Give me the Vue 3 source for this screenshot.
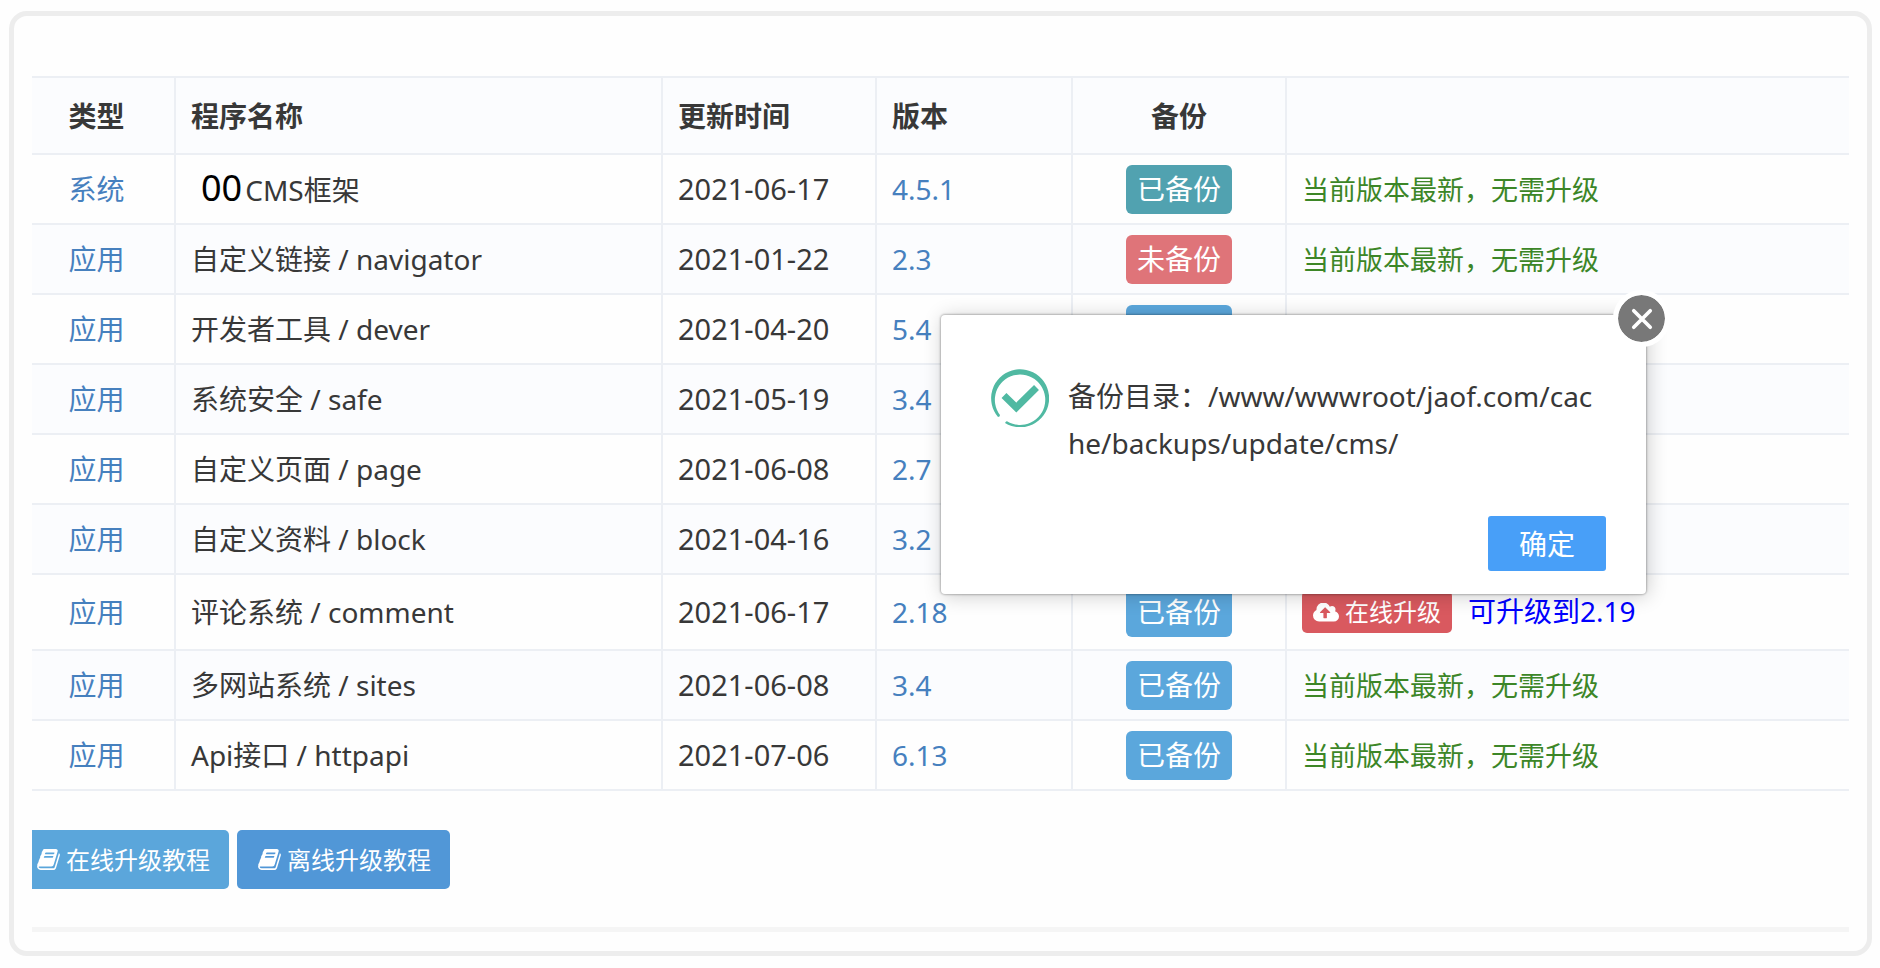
<script setup>
import { ref } from 'vue'

const latest = '当前版本最新，无需升级'

const rows = [
  { type: '系统', mark: '00', name: 'CMS框架', date: '2021-06-17', version: '4.5.1', backup: '已备份', tone: 'teal', status: latest },
  { type: '应用', name: '自定义链接 / navigator', date: '2021-01-22', version: '2.3', backup: '未备份', tone: 'red', status: latest },
  { type: '应用', name: '开发者工具 / dever', date: '2021-04-20', version: '5.4', tone: 'blue' },
  { type: '应用', name: '系统安全 / safe', date: '2021-05-19', version: '3.4' },
  { type: '应用', name: '自定义页面 / page', date: '2021-06-08', version: '2.7' },
  { type: '应用', name: '自定义资料 / block', date: '2021-04-16', version: '3.2' },
  { type: '应用', name: '评论系统 / comment', date: '2021-06-17', version: '2.18', backup: '已备份', tone: 'blue', upgrade: '可升级到2.19' },
  { type: '应用', name: '多网站系统 / sites', date: '2021-06-08', version: '3.4', backup: '已备份', tone: 'blue', status: latest },
  { type: '应用', name: 'Api接口 / httpapi', date: '2021-07-06', version: '6.13', backup: '已备份', tone: 'blue', status: latest },
]

const guides = [
  { label: '在线升级教程', kind: 'online' },
  { label: '离线升级教程', kind: 'offline' },
]

const open = ref(true)
</script>

<template>
  <div class="page">
    <main class="frame">
      <table class="apps">
        <colgroup>
          <col class="c-type" />
          <col class="c-name" />
          <col class="c-date" />
          <col class="c-version" />
          <col class="c-backup" />
          <col />
        </colgroup>
        <thead>
          <tr>
            <th class="type">类型</th>
            <th>程序名称</th>
            <th>更新时间</th>
            <th>版本</th>
            <th class="backup">备份</th>
            <th></th>
          </tr>
        </thead>
        <tbody>
          <tr v-for="row in rows" :key="row.name" :class="{ tall: row.upgrade }">
            <td class="type"><a href="#">{{ row.type }}</a></td>
            <td><span v-if="row.mark" class="mark">{{ row.mark }}</span>{{ row.name }}</td>
            <td class="date">{{ row.date }}</td>
            <td><a href="#">{{ row.version }}</a></td>
            <td class="backup"><button v-if="row.tone" type="button" class="badge" :class="row.tone">{{ row.backup }}</button></td>
            <td>
              <div v-if="row.upgrade" class="upgrade">
                <button type="button" class="upgrade-btn">
                  <svg class="cloud" viewBox="0 256 1920 1344" aria-hidden="true">
                    <path fill="currentColor" d="M1280 928q0-14-9-23l-352-352q-9-9-23-9t-23 9l-351 351q-10 12-10 24 0 14 9 23t23 9h224v352q0 13 9.5 22.5t22.5 9.5h192q13 0 22.5-9.5t9.5-22.5v-352h224q13 0 22.5-9.5t9.5-22.5zm640 288q0 159-112.5 271.5t-271.5 112.5h-1088q-185 0-316.5-131.5t-131.5-316.5q0-130 70-240t188-165q-2-30-2-43 0-212 150-362t362-150q156 0 285.5 87t188.5 231q71-62 166-62 106 0 181 75t75 181q0 76-41 138 130 31 213.5 135.5t83.5 238.5z" />
                  </svg>
                  <span>在线升级</span>
                </button>
                <span class="target">{{ row.upgrade }}</span>
              </div>
              <span v-else-if="row.status" class="latest">{{ row.status }}</span>
            </td>
          </tr>
        </tbody>
      </table>

      <div class="guides">
        <a v-for="guide in guides" :key="guide.kind" href="#" class="guide" :class="guide.kind">
          <svg class="book" viewBox="0 128 1664 1536" aria-hidden="true">
            <path fill="currentColor" d="M1639 478q40 57 18 129l-275 906q-19 64-76.5 107.5t-122.5 43.5h-923q-77 0-148.5-53.5t-99.5-131.5q-24-67-2-127 0-4 3-27t4-37q1-8-3-21.5t-3-19.5q2-11 8-21t16.5-23.5 16.5-23.5q23-38 45-91.5t30-91.5q3-10 .5-30t-.5-28q3-11 17-28t17-23q21-36 42-92t25-90q1-9-2.5-32t.5-28q4-13 22-30.5t22-22.5q19-26 42.5-84.5t27.5-96.5q1-8-3-25.5t-2-26.5q2-8 9-18t18-23 17-21q8-12 16.5-30.5t15-35 16-36 19.5-32 26.5-23.5 36-11.5 47.5 5.5l-1 3q38-9 51-9h761q74 0 114 56t18 130l-274 906q-36 119-71.5 153.5t-128.5 34.5h-869q-27 0-38 15-11 16-1 43 24 70 144 70h923q29 0 56-15.5t35-41.5l300-987q7-22 5-57 38 15 59 43zm-1064 2q-4 13 2 22.5t20 9.5h608q13 0 25.5-9.5t16.5-22.5l21-64q4-13-2-22.5t-20-9.5h-608q-13 0-25.5 9.5t-16.5 22.5zm-83 256q-4 13 2 22.5t20 9.5h608q13 0 25.5-9.5t16.5-22.5l21-64q4-13-2-22.5t-20-9.5h-608q-13 0-25.5 9.5t-16.5 22.5z" />
          </svg>
          <span>{{ guide.label }}</span>
        </a>
      </div>

      <hr class="rule" />
    </main>

    <section v-if="open" class="dialog" role="dialog" aria-label="备份目录">
      <div class="message">
        <svg class="done" viewBox="0 0 58 58" aria-hidden="true">
          <path fill="#50b9a2" d="M7 48A29 29 0 1 1 14 54Q15 52 16 52.300A25.200 25.200 0 1 0 9 46Q9 48 7 48Z" />
          <path fill="none" stroke="#50b9a2" stroke-width="7" d="M13 26.500L25.300 38.500L45.500 18.500" />
        </svg>
        <p class="text">备份目录：/www/wwwroot/jaof.com/cache/backups/update/cms/</p>
      </div>
      <div class="actions">
        <button type="button" class="confirm" @click="open = false">确定</button>
      </div>
      <button type="button" class="close" aria-label="关闭" @click="open = false">
        <svg viewBox="0 0 24 24" aria-hidden="true">
          <path d="M3 3L21 21M21 3L3 21" fill="none" stroke="#fff" stroke-width="4" stroke-linecap="round" />
        </svg>
      </button>
    </section>
  </div>
</template>

<style>
body {
  background: #fefefe;
}
</style>

<style scoped>
.page {
  position: relative;
  box-sizing: border-box;
  padding: 11px 8px 12px 9px;
  color: #383838;
  font-family: "Noto Sans", "Noto Sans CJK SC", sans-serif;
  font-size: 28px;
  line-height: 40px;
}

button {
  border: 0;
  font: inherit;
  cursor: pointer;
}

a {
  color: #4680be;
  text-decoration: none;
}

.frame {
  border: 5px solid #ededed;
  border-radius: 18px;
  padding: 60px 18px 19px;
}

.apps {
  width: 100%;
  table-layout: fixed;
  border-collapse: separate;
  border-spacing: 0;
}

.c-type { width: 144px; }
.c-name { width: 487px; }
.c-date { width: 214px; }
.c-version { width: 196px; }
.c-backup { width: 214px; }

th,
td {
  box-sizing: border-box;
  height: 70px;
  padding: 0 15px;
  border-right: 2px solid #eceff4;
  border-bottom: 2px solid #eceff4;
  text-align: left;
  vertical-align: middle;
  white-space: nowrap;
}

th {
  height: 79px;
  border-top: 2px solid #eceff4;
  font-weight: 700;
}

th:last-child,
td:last-child {
  border-right: 0;
}

thead tr,
tbody tr:nth-child(even) {
  background: #fbfcfe;
}

.tall td {
  height: 76px;
}

.type {
  padding: 0 13px 0 0;
  text-align: center;
}

.backup {
  padding: 0;
  text-align: center;
}

.date {
  font-size: 29px;
}

.mark {
  margin: 0 3px 0 10px;
  color: #000;
  font-size: 36px;
}

.badge {
  display: block;
  min-width: 106px;
  height: 49px;
  margin: 0 auto;
  padding: 0 11px;
  border-radius: 6px;
  color: #fff;
}

.teal { background: #51a2b0; }
.red { background: #df7479; }
.blue { background: #5ba7dc; }

.latest {
  color: #3c8627;
  font-size: 27px;
}

.upgrade {
  display: flex;
  align-items: flex-start;
  gap: 16px;
}

.upgrade-btn {
  display: flex;
  align-items: center;
  gap: 6px;
  height: 42px;
  padding: 0 11px;
  border-radius: 5px;
  background: #d9595f;
  color: #fff;
  font-size: 24px;
}

.cloud {
  width: 26px;
  height: 19px;
}

.target {
  color: #00f;
}

.guides {
  display: flex;
  gap: 8px;
  margin-top: 39px;
}

.guide {
  display: flex;
  align-items: center;
  gap: 6px;
  height: 59px;
  padding: 0 19px 0 21px;
  border-radius: 5px;
  color: #fff;
  font-size: 24px;
}

.online {
  padding-left: 5px;
  border-radius: 0 5px 5px 0;
  background: #5ba6db;
}

.offline {
  background: #5197d7;
}

.book {
  width: 23px;
  height: 21px;
}

.rule {
  height: 5px;
  margin: 38px 0 0;
  border: 0;
  background: #f5f5f5;
}

.dialog {
  position: absolute;
  top: 315px;
  left: 50%;
  box-sizing: border-box;
  width: 705px;
  margin-left: 1px;
  padding: 54px 40px 23px 50px;
  border-radius: 4px;
  background: #fff;
  box-shadow: 0 0 2px 1px rgba(0, 0, 0, 0.24), 2px 2px 20px rgba(0, 0, 0, 0.2);
}

.message {
  display: flex;
  align-items: flex-start;
  gap: 19px;
}

.done {
  flex: none;
  width: 58px;
  height: 58px;
}

.text {
  flex: 1;
  margin: 4px 0 0;
  line-height: 47px;
  word-break: break-all;
}

.actions {
  display: flex;
  justify-content: flex-end;
  margin-top: 49px;
}

.confirm {
  height: 55px;
  padding: 0 31px;
  border-radius: 3px;
  background: #489ff8;
  color: #fff;
}

.close {
  position: absolute;
  top: -25px;
  right: -24px;
  display: flex;
  align-items: center;
  justify-content: center;
  box-sizing: border-box;
  width: 57px;
  height: 57px;
  padding: 0;
  border: 5px solid #fff;
  border-radius: 50%;
  background: #787878;
  background-clip: padding-box;
}

.close svg {
  width: 22px;
  height: 22px;
}
</style>
